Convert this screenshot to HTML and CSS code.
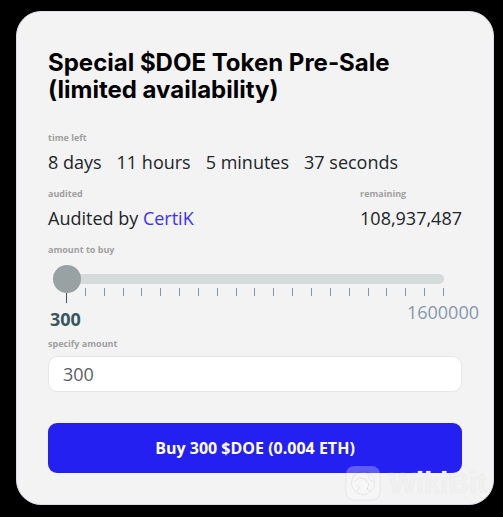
FILE: index.html
```html
<!DOCTYPE html>
<html lang="en">
<head>
    <meta charset="UTF-8">
    <meta name="viewport" content="width=device-width, initial-scale=1.0">
    <title>Special $DOE Token Pre-Sale</title>
    <link rel="stylesheet" href="styles.css">
</head>
<body>
    <main class="card">
        <h1>Special $DOE Token Pre-Sale (limited availability)</h1>

        <div class="field">
            <div class="label">time left</div>
            <div class="value countdown">
                <span>8 days</span>
                <span>11 hours</span>
                <span>5 minutes</span>
                <span>37 seconds</span>
            </div>
        </div>

        <div class="row">
            <div class="field">
                <div class="label">audited</div>
                <div class="value">Audited by <a href="#">CertiK</a></div>
            </div>
            <div class="field">
                <div class="label">remaining</div>
                <div class="value">108,937,487</div>
            </div>
        </div>

        <form id="buyForm">
            <label class="label" for="amountRange">amount to buy</label>
            <div class="slider">
                <input type="range" id="amountRange" min="300" max="1600000" value="300">
                <div class="ticks">
                    <i class="current"></i><i></i><i></i><i></i><i></i><i></i><i></i>
                    <i></i><i></i><i></i><i></i><i></i><i></i><i></i>
                    <i></i><i></i><i></i><i></i><i></i><i></i><i></i>
                </div>
            </div>
            <div class="limits">
                <span class="min">300</span>
                <span class="max">1600000</span>
            </div>

            <label class="label" for="amountInput">specify amount</label>
            <input type="text" id="amountInput" class="amount" value="300">

            <button type="button" class="buy">Buy 300 $DOE (0.004 ETH)</button>
        </form>

        <!-- Watermark -->
        <div class="watermark">
            <svg width="36" height="36" viewBox="0 0 36 36" fill="none">
                <rect x="1" y="1" width="34" height="34" rx="8" fill="#fff" fill-opacity=".27" stroke="#000" stroke-opacity=".06"/>
                <circle cx="18" cy="18" r="11.5" stroke="#000" stroke-opacity=".07"/>
                <g stroke="#fff" stroke-opacity=".3" stroke-width="2">
                    <path d="M8 21c0-8 5-13 13-12 5 1 7 5 7 9"/>
                    <path d="M11 24c5-1 2-5 6-6 3-1 5 1 4 4l-4 6"/>
                    <path d="M20 9c5 4 6 10 2 16"/>
                </g>
                <path d="M9 17l5-4 6 1 4 5-2 6M12 26l3-4-3-2M22 8l3 7 4 2M25 26l-3-3" stroke="#000" stroke-opacity=".07"/>
            </svg>
            <span>WikiBit</span>
        </div>
    </main>
</body>
</html>
```
FILE: styles.css
```css
* {
    box-sizing: border-box;
}

body {
    margin: 0;
    padding: 11px 9px 12px 16px;
    background-color: #000000;
    color: #212529;
    font-family: "Open Sans", "Noto Sans", sans-serif;
}

.card {
    position: relative;
    padding: 37px 31px 31px;
    background-color: #f3f3f3;
    border: 1px solid #dcdce8;
    border-radius: 25px;
}

h1 {
    margin: 0 0 29px;
    color: #000000;
    font-family: Inter, sans-serif;
    font-size: 24px;
    font-weight: 700;
    line-height: 27px;
}

.label {
    display: block;
    color: #a0a0a0;
    font-size: 9px;
    font-weight: 700;
    line-height: 12px;
}

.value {
    margin: 2px 0 10px;
    font-size: 18px;
    line-height: 32px;
}

.countdown {
    display: flex;
    gap: 15px;
}

.row {
    display: flex;
    justify-content: space-between;
}

a {
    color: #3b30f5;
    text-decoration: none;
}

.slider {
    margin: 9px 18px 0 5px;
}

input[type="range"] {
    -webkit-appearance: none;
    appearance: none;
    display: block;
    width: 100%;
    height: 28px;
    margin: 0;
    background: none;
}

input[type="range"]::-webkit-slider-runnable-track {
    height: 10px;
    border-radius: 5px;
    background-color: #d5dada;
}

input[type="range"]::-webkit-slider-thumb {
    -webkit-appearance: none;
    width: 28px;
    height: 28px;
    margin-top: -9px;
    border-radius: 50%;
    background-color: #98a2a2;
}

.ticks {
    display: flex;
    justify-content: space-between;
    height: 10px;
    margin-left: 13px;
}

.ticks i {
    width: 1px;
    height: 8px;
    margin-top: -5px;
    background-color: #8495a8;
}

.ticks .current {
    height: 10px;
    margin-top: 0;
    background-color: #37575f;
}

.limits {
    display: flex;
    justify-content: space-between;
    margin: 0 -17px 5px 2px;
    font-size: 18px;
    line-height: 28px;
}

.min {
    padding-top: 2px;
    color: #37575f;
    font-weight: 700;
}

.max {
    margin-top: -5px;
    color: #8798ad;
}

.amount {
    display: block;
    width: 100%;
    height: 36px;
    margin: 6px 0 31px;
    padding: 0 14px;
    border: 1px solid #e6e6e6;
    border-radius: 9px;
    background-color: #ffffff;
    color: #5c6066;
    font-family: inherit;
    font-size: 18px;
}

.buy {
    display: block;
    width: 100%;
    height: 50px;
    border: none;
    border-radius: 9px;
    background-color: #2520f2;
    color: #ffffff;
    font-family: inherit;
    font-size: 16px;
    font-weight: 700;
    cursor: pointer;
}

.watermark {
    position: absolute;
    right: 6px;
    bottom: 3px;
    display: flex;
    align-items: center;
    gap: 8px;
    color: #f0f0f0;
    font-family: "Liberation Sans", Arial, sans-serif;
    font-size: 29px;
    font-weight: 700;
    text-shadow: 0 0 1px #e2e2e2;
    pointer-events: none;
}
```
